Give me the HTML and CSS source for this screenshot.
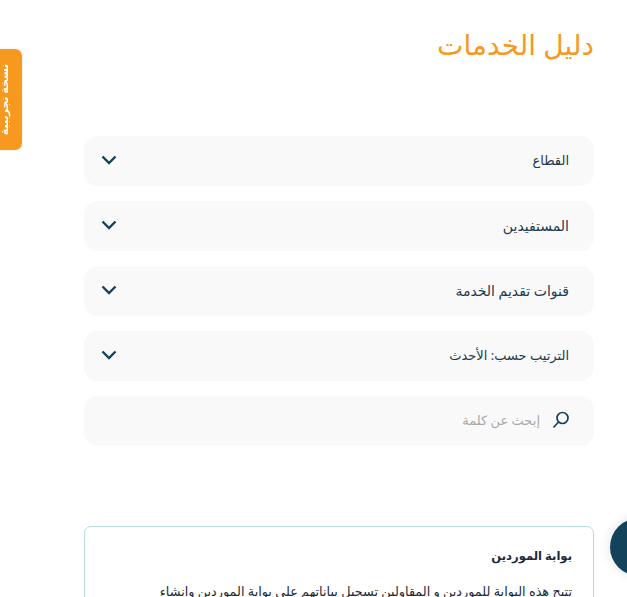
FILE: index.html
```html
<!DOCTYPE html>
<html lang="ar" dir="rtl">
<head>
    <meta charset="UTF-8">
    <meta name="viewport" content="width=device-width, initial-scale=1.0">
    <title>دليل الخدمات</title>
    <link rel="stylesheet" href="styles.css">
</head>
<body>
    <div class="beta-tab"><span>نسخة تجريبية</span></div>
    <div class="chat-btn"></div>

    <main class="page">
        <h1 class="title">دليل الخدمات</h1>

        <div class="filters">
            <div class="filter">
                <span>القطاع</span>
                <svg class="chevron" viewBox="0 0 16 10"><path d="M1.5 1.5 8 8l6.500-6.500"/></svg>
            </div>
            <div class="filter">
                <span class="wide">المستفيدين</span>
                <svg class="chevron" viewBox="0 0 16 10"><path d="M1.5 1.5 8 8l6.500-6.500"/></svg>
            </div>
            <div class="filter">
                <span class="wide">قنوات تقديم الخدمة</span>
                <svg class="chevron" viewBox="0 0 16 10"><path d="M1.5 1.5 8 8l6.500-6.500"/></svg>
            </div>
            <div class="filter">
                <span>الترتيب حسب: الأحدث</span>
                <svg class="chevron" viewBox="0 0 16 10"><path d="M1.5 1.5 8 8l6.500-6.500"/></svg>
            </div>
            <div class="filter search">
                <svg class="search-icon" viewBox="0 0 18 18"><circle cx="10.500" cy="7" r="5.500"/><path d="M6.500 11 1.500 16.500"/></svg>
                <span>إبحث عن كلمة</span>
            </div>
        </div>

        <section class="card">
            <h2>بوابة الموردين</h2>
            <p>تتيح هذه البوابة للموردين و المقاولين تسجيل بياناتهم على بوابة الموردين وانشاء حساب خاص بهم</p>
        </section>
    </main>
</body>
</html>
```

FILE: styles.css
```css
* { margin: 0; padding: 0; box-sizing: border-box; font-family: "Noto Sans", "DejaVu Sans", sans-serif; }
html, body { height: 597px; overflow: hidden; background: #fff; }
.page { width: 627px; padding: 22px 33px 0 84px; }
.title { color: #f7981f; font-size: 28px; font-weight: 400; line-height: 44px; height: 114px; }
.filters { display: flex; flex-direction: column; gap: 15px; }
.filter { display: flex; align-items: center; justify-content: space-between; height: 50px; padding: 0 25px 2px 17px; background: #f9f9f9; border-radius: 14px; color: #1c3a50; font-size: 13px; }
.filter .wide { font-size: 14px; }
.chevron { width: 16px; height: 10px; fill: none; stroke: #16425b; stroke-width: 2.400; }
.search { justify-content: flex-start; gap: 12px; padding-right: 24px; color: #a9a9a9; }
.search-icon { width: 18px; height: 18px; fill: none; stroke: #16425b; stroke-width: 1.700; }
.card { margin-top: 80px; padding: 18px 21px 0 45px; height: 200px; border: 1px solid #b5dde0; border-radius: 7px; color: #1c2b3a; }
.card h2 { font-size: 11.600px; font-weight: 700; line-height: 22px; margin-bottom: 12px; }
.card p { font-size: 12.800px; line-height: 24px; }
.beta-tab { position: fixed; left: 0; top: 49px; width: 22px; height: 101px; padding-right: 14px; display: flex; align-items: center; justify-content: center; background: #f7981f; border-radius: 0 7px 7px 0; box-shadow: 0 0 3px rgba(0, 0, 0, 0.1); overflow: hidden; }
.beta-tab span { flex: none; transform: rotate(-90deg); color: #fff; font-size: 11px; font-weight: 700; white-space: nowrap; }
.chat-btn { position: fixed; left: 610px; top: 518px; width: 58px; height: 58px; border-radius: 50%; background: #14425b; box-shadow: 0 0 12px rgba(0, 0, 0, 0.12); }
```
